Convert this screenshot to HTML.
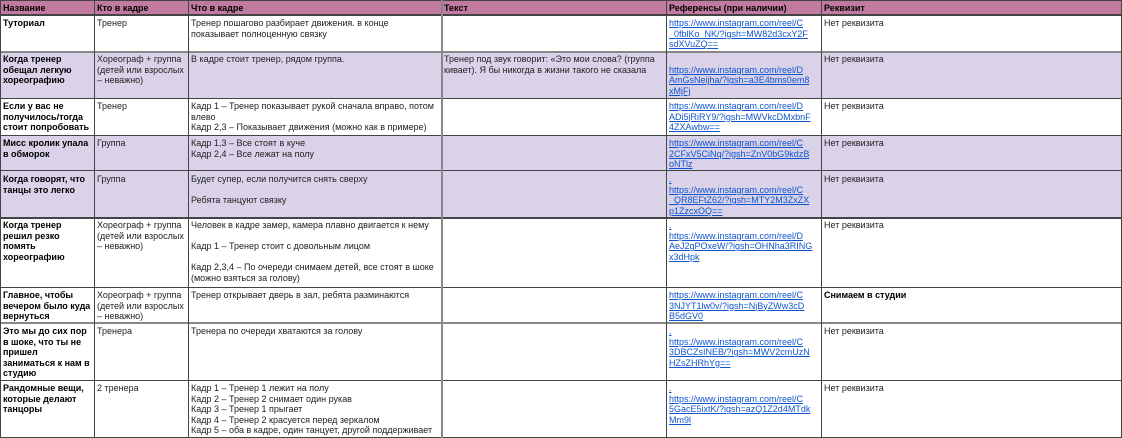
<!DOCTYPE html>
<html><head><meta charset="utf-8"><style>
body{margin:0;width:1122px;height:438px;overflow:hidden;background:#fff;font-family:"Liberation Sans",Arial,sans-serif;font-size:9px;color:#222;}
.r{position:absolute;left:0;width:1122px;}
.c{position:absolute;padding:2px 3px 0 3px;line-height:10.6px;box-sizing:border-box;overflow:hidden;white-space:nowrap;}
.b{font-weight:bold;color:#000}
a{color:#1155cc;text-decoration:underline;}
.v{position:absolute;top:0;height:438px;width:1px;background:#444;}
.h{position:absolute;left:0;width:1122px;height:1px;background:#444;}
</style></head><body>
<div class="r" style="top:0;height:15px;background:#c27ba0"></div>
<div class="r" style="top:51px;height:47px;background:#d9d2e9"></div>
<div class="r" style="top:135px;height:82px;background:#d9d2e9"></div>

<div class="h" style="top:0"></div>
<div class="h" style="top:14px;height:2px"></div>
<div class="h" style="top:51px;background:#888;height:2px"></div>
<div class="h" style="top:98px"></div>
<div class="h" style="top:135px"></div>
<div class="h" style="top:170px"></div>
<div class="h" style="top:217px;height:2px"></div>
<div class="h" style="top:287px"></div>
<div class="h" style="top:322px;height:2px;background:#888"></div>
<div class="h" style="top:380px"></div>
<div class="h" style="top:437px"></div>
<div class="v" style="left:0"></div>
<div class="v" style="left:94px"></div>
<div class="v" style="left:188px"></div>
<div class="v" style="left:441px;width:2px;background:#888"></div>
<div class="v" style="left:666px"></div>
<div class="v" style="left:821px"></div>
<div class="v" style="left:1121px"></div>

<div class="c b" style="top:1px;left:0;width:94px">Название</div>
<div class="c b" style="top:1px;left:94px;width:94px">Кто в кадре</div>
<div class="c b" style="top:1px;left:188px;width:253px">Что в кадре</div>
<div class="c b" style="top:1px;left:441px;width:225px">Текст</div>
<div class="c b" style="top:1px;left:666px;width:155px">Референсы (при наличии)</div>
<div class="c b" style="top:1px;left:821px;width:300px">Реквизит</div>

<div class="c b" style="top:16px;left:0;width:94px">Туториал</div>
<div class="c" style="top:16px;left:94px;width:94px">Тренер</div>
<div class="c" style="top:16px;left:188px;width:253px">Тренер пошагово разбирает движения. в конце<br>показывает полноценную связку</div>
<div class="c" style="top:16px;left:666px;width:155px"><a>https://www.instagram.com/reel/C<br>_0fblKo_NK/?igsh=MW82d3cxY2F<br>sdXVuZQ==</a></div>
<div class="c" style="top:16px;left:821px;width:300px">Нет реквизита</div>

<div class="c b" style="top:52px;left:0;width:94px">Когда тренер<br>обещал легкую<br>хореографию</div>
<div class="c" style="top:52px;left:94px;width:94px">Хореограф + группа<br>(детей или взрослых<br>– неважно)</div>
<div class="c" style="top:52px;left:188px;width:253px">В кадре стоит тренер, рядом группа.</div>
<div class="c" style="top:52px;left:441px;width:225px">Тренер под звук говорит: «Это мои слова? (группа<br>кивает). Я бы никогда в жизни такого не сказала</div>
<div class="c" style="top:52px;left:666px;width:155px">&nbsp;<br><a>https://www.instagram.com/reel/D<br>AmGsNeijha/?igsh=a3E4bms0em8<br>xMjFj</a></div>
<div class="c" style="top:52px;left:821px;width:300px">Нет реквизита</div>

<div class="c b" style="top:99px;left:0;width:94px">Если у вас не<br>получилось/тогда<br>стоит попробовать</div>
<div class="c" style="top:99px;left:94px;width:94px">Тренер</div>
<div class="c" style="top:99px;left:188px;width:253px">Кадр 1 – Тренер показывает рукой сначала вправо, потом<br>влево<br>Кадр 2,3 – Показывает движения (можно как в примере)</div>
<div class="c" style="top:99px;left:666px;width:155px"><a>https://www.instagram.com/reel/D<br>ADi5jRiRY9/?igsh=MWVkcDMxbnF<br>4ZXAwbw==</a></div>
<div class="c" style="top:99px;left:821px;width:300px">Нет реквизита</div>

<div class="c b" style="top:136px;left:0;width:94px">Мисс кролик упала<br>в обморок</div>
<div class="c" style="top:136px;left:94px;width:94px">Группа</div>
<div class="c" style="top:136px;left:188px;width:253px">Кадр 1,3 – Все стоят в куче<br>Кадр 2,4 – Все лежат на полу</div>
<div class="c" style="top:136px;left:666px;width:155px"><a>https://www.instagram.com/reel/C<br>2CFxV5CiNq/?igsh=ZnV0bG9kdzB<br>oNTlz</a></div>
<div class="c" style="top:136px;left:821px;width:300px">Нет реквизита</div>

<div class="c b" style="top:172px;left:0;width:94px">Когда говорят, что<br>танцы это легко</div>
<div class="c" style="top:172px;left:94px;width:94px">Группа</div>
<div class="c" style="top:172px;left:188px;width:253px">Будет супер, если получится снять сверху<br><br>Ребята танцуют связку</div>
<div class="c" style="top:172px;left:666px;width:155px"><a>.</a><br><a>https://www.instagram.com/reel/C<br>_QR8EFtZ62/?igsh=MTY2M3ZxZX<br>p1ZzcxOQ==</a></div>
<div class="c" style="top:172px;left:821px;width:300px">Нет реквизита</div>

<div class="c b" style="top:218px;left:0;width:94px">Когда тренер<br>решил резко<br>помять<br>хореографию</div>
<div class="c" style="top:218px;left:94px;width:94px">Хореограф + группа<br>(детей или взрослых<br>– неважно)</div>
<div class="c" style="top:218px;left:188px;width:253px">Человек в кадре замер, камера плавно двигается к нему<br><br>Кадр 1 – Тренер стоит с довольным лицом<br><br>Кадр 2,3,4 – По очереди снимаем детей, все стоят в шоке<br>(можно взяться за голову)</div>
<div class="c" style="top:218px;left:666px;width:155px"><a>.</a><br><a>https://www.instagram.com/reel/D<br>AeJ2gPOxeW/?igsh=OHNha3RING<br>x3dHpk</a></div>
<div class="c" style="top:218px;left:821px;width:300px">Нет реквизита</div>

<div class="c b" style="top:288px;left:0;width:94px">Главное, чтобы<br>вечером было куда<br>вернуться</div>
<div class="c" style="top:288px;left:94px;width:94px">Хореограф + группа<br>(детей или взрослых<br>– неважно)</div>
<div class="c" style="top:288px;left:188px;width:253px">Тренер открывает дверь в зал, ребята разминаются</div>
<div class="c" style="top:288px;left:666px;width:155px"><a>https://www.instagram.com/reel/C<br>3NJYT1lw0v/?igsh=NjByZWw3cD<br>B5dGV0</a></div>
<div class="c b" style="top:288px;left:821px;width:300px">Снимаем в студии</div>

<div class="c b" style="top:324px;left:0;width:94px">Это мы до сих пор<br>в шоке, что ты не<br>пришел<br>заниматься к нам в<br>студию</div>
<div class="c" style="top:324px;left:94px;width:94px">Тренера</div>
<div class="c" style="top:324px;left:188px;width:253px">Тренера по очереди хватаются за голову</div>
<div class="c" style="top:324px;left:666px;width:155px"><a>.</a><br><a>https://www.instagram.com/reel/C<br>3DBCZsINEB/?igsh=MWV2cmUzN<br>HZsZHRhYg==</a></div>
<div class="c" style="top:324px;left:821px;width:300px">Нет реквизита</div>

<div class="c b" style="top:381px;left:0;width:94px">Рандомные вещи,<br>которые делают<br>танцоры</div>
<div class="c" style="top:381px;left:94px;width:94px">2 тренера</div>
<div class="c" style="top:381px;left:188px;width:253px">Кадр 1 – Тренер 1 лежит на полу<br>Кадр 2 – Тренер 2 снимает один рукав<br>Кадр 3 – Тренер 1 прыгает<br>Кадр 4 – Тренер 2 красуется перед зеркалом<br>Кадр 5 – оба в кадре, один танцует, другой поддерживает</div>
<div class="c" style="top:381px;left:666px;width:155px"><a>.</a><br><a>https://www.instagram.com/reel/C<br>5GacE5ixtK/?igsh=azQ1Z2d4MTdk<br>Mm9l</a></div>
<div class="c" style="top:381px;left:821px;width:300px">Нет реквизита</div>
</body></html>
